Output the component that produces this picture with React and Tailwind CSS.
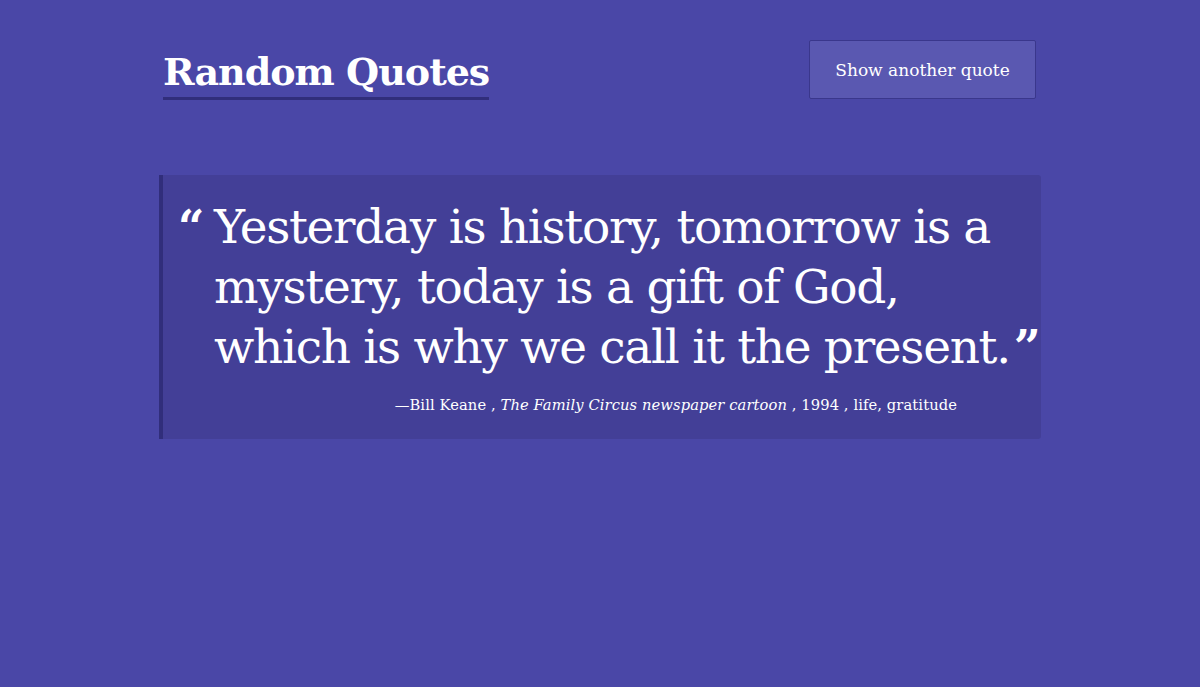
import React from 'react';

const quote = {
  lines: ['Yesterday is history, tomorrow is a', 'mystery, today is a gift of God,', 'which is why we call it the present.'],
  author: 'Bill Keane',
  source: 'The Family Circus newspaper cartoon',
  year: '1994',
  tags: 'life, gratitude',
};

export default function App() {
  return (
    <div className="min-h-screen w-full bg-[#4a47a7] text-white" style={{ fontFamily: '"DejaVu Serif", "Liberation Serif", serif' }}>
      <div className="mx-auto w-[882px] pt-10">
        {/* Header */}
        <div className="flex items-start justify-between">
          <h1 className="ml-1 mt-[7px] border-b-[3px] border-[#312e7b] text-[38px] font-bold leading-[50px] tracking-[-1px]">
            Random Quotes
          </h1>
          <button className="mr-[5px] h-[59px] w-[227px] rounded-[2px] border border-[#3a378c] bg-[#5a58b1] pt-[3px] text-[17px] text-white">
            Show another quote
          </button>
        </div>

        {/* Quote card */}
        <div className="mt-[75px] rounded-r-[3px] border-l-4 border-[#312e7b] bg-[#433f97] pb-[23px] pt-[22px]">
          <div className="flex">
            <span className="ml-[15px] w-[36px] shrink-0 text-[46px] font-bold leading-[60px]">“</span>
            <p className="whitespace-nowrap text-[47px] leading-[60px] tracking-[-1.3px]">
              {quote.lines[0]}
              <br />
              {quote.lines[1]}
              <br />
              {quote.lines[2]}
              <span className="ml-[4px] font-bold">”</span>
            </p>
          </div>
          <p className="mt-[17px] pr-[84px] text-right text-[14.7px] tracking-[0.1px]">
            —{quote.author} , <em>{quote.source}</em> , {quote.year} , {quote.tags}
          </p>
        </div>
      </div>
    </div>
  );
}
